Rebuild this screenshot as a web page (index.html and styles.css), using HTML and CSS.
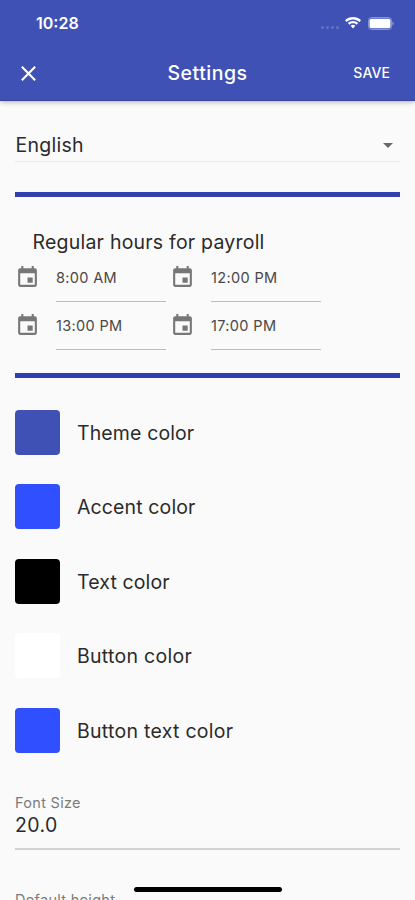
FILE: index.html
```html
<!DOCTYPE html>
<html lang="en">
<head>
<meta charset="utf-8">
<title>Settings</title>
<link rel="stylesheet" href="styles.css">
</head>
<body>
<svg class="defs" aria-hidden="true">
  <symbol id="calendar" viewBox="0 0 24 24"><path d="M17 12h-5v5h5v-5zM16 1v2H8V1H6v2H5c-1.100 0-2 .9-2 2v14c0 1.100.9 2 2 2h14c1.100 0 2-.9 2-2V5c0-1.100-.9-2-2-2h-1V1h-2zm3 18H5V8h14v11z"/></symbol>
</svg>
<header class="header">
  <div class="status">
    <span class="clock">10:28</span>
    <div class="indicators">
      <span class="cell"><i></i><i></i><i></i><i></i></span>
      <svg class="wifi" viewBox="0 0 16 12"><path d="M8 0C4.900 0 2.100 1.200 0 3.200l1.600 1.700C3.300 3.300 5.500 2.400 8 2.400s4.700.9 6.400 2.500L16 3.200C13.900 1.200 11.100 0 8 0zM8 4C6 4 4.200 4.800 2.800 6l1.600 1.700C5.400 6.800 6.600 6.300 8 6.300s2.600.5 3.600 1.400L13.200 6C11.800 4.800 10 4 8 4zM8 7.800c-.9 0-1.700.3-2.300.9L8 11.500l2.300-2.800c-.6-.6-1.400-.9-2.300-.9z"/></svg>
      <svg class="battery" viewBox="0 0 27 13"><rect class="shell" x=".5" y=".5" width="23" height="12" rx="3"/><rect x="1.500" y="1.700" width="21" height="9.600" rx="1.800"/><path class="cap" d="M24.500 4.500c1.600.6 1.600 3.400 0 4z"/></svg>
    </div>
  </div>
  <div class="toolbar">
    <svg class="close" viewBox="0 0 14 14"><path d="M.8.8l12.400 12.400M13.200.8L.8 13.200"/></svg>
    <h1 class="title">Settings</h1>
    <span class="save">SAVE</span>
  </div>
</header>
<main class="content">
  <div class="select"><span class="body-text english">English</span><span class="arrow"></span></div>
  <div class="divider"></div>
  <section class="payroll">
    <h2 class="body-text heading">Regular hours for payroll</h2>
    <div class="times">
      <div class="time"><svg><use href="#calendar"/></svg><span>8:00 AM</span></div>
      <div class="time"><svg><use href="#calendar"/></svg><span>12:00 PM</span></div>
      <div class="time"><svg><use href="#calendar"/></svg><span>13:00 PM</span></div>
      <div class="time"><svg><use href="#calendar"/></svg><span>17:00 PM</span></div>
    </div>
  </section>
  <div class="divider"></div>
  <section class="colors">
    <div class="color"><span class="swatch theme"></span><span class="body-text">Theme color</span></div>
    <div class="color"><span class="swatch accent"></span><span class="body-text">Accent color</span></div>
    <div class="color"><span class="swatch black"></span><span class="body-text">Text color</span></div>
    <div class="color"><span class="swatch white"></span><span class="body-text wide">Button color</span></div>
    <div class="color"><span class="swatch accent"></span><span class="body-text wide">Button text color</span></div>
  </section>
  <div class="field"><span class="label">Font Size</span><span class="body-text value">20.0</span></div>
  <div class="field next"><span class="label">Default height</span></div>
</main>
<div class="home-indicator"></div>
</body>
</html>
```
FILE: styles.css
```css
* { box-sizing: border-box; }
body {
  margin: 0;
  height: 900px;
  overflow: hidden;
  position: relative;
  background: #fafafa;
  color: #2b2b2b;
  font-family: Inter, "Liberation Sans", sans-serif;
}
.defs { display: none; }
.header {
  height: 101px;
  background: #3f51b5;
  color: #fff;
  border-bottom: 1px solid #3445a5;
  box-shadow: 0 1px 5px rgba(0, 0, 0, .3);
}
.status {
  height: 46px;
  padding: 0 20px 0 36px;
  display: flex;
  align-items: center;
  justify-content: space-between;
}
.clock { font-size: 16px; font-weight: 600; line-height: 20px; letter-spacing: 0; }
.indicators { display: flex; align-items: center; }
.cell { display: flex; gap: 2px; padding-top: 8px; margin-right: 6px; }
.cell i { width: 3px; height: 3px; border-radius: 50%; background: #6473c5; }
.wifi { width: 16px; height: 12px; fill: #fff; margin-right: 7px; }
.battery { width: 27px; height: 13px; fill: #fff; }
.battery .shell { fill: none; stroke: #8995d3; }
.battery .cap { fill: #a0abdf; }
.toolbar {
  height: 54px;
  padding: 0 25px 0 21px;
  display: grid;
  grid-template-columns: 60px 1fr 56px;
  align-items: center;
}
.close { width: 15px; height: 15px; fill: none; stroke: #fff; stroke-width: 2; }
.title { margin: 0; font-size: 19.500px; font-weight: 500; letter-spacing: .5px; text-align: center; line-height: 24px; }
.save { font-size: 14px; font-weight: 500; letter-spacing: .1px; text-align: right; line-height: 18px; }
.content { padding: 27px 15px 0; }
.body-text { font-size: 19.500px; line-height: 24px; font-weight: 400; letter-spacing: .12px; white-space: nowrap; }
.body-text.wide { letter-spacing: .28px; }
.select {
  height: 34px;
  padding: 5px 7px 0 .5px;
  border-bottom: 1px solid #ebebeb;
  display: flex;
  justify-content: space-between;
}
.body-text.english { letter-spacing: .25px; }
.arrow { margin-top: 10px; width: 0; height: 0; border: 5px solid transparent; border-top-color: #686868; border-bottom: 0; }
.divider { height: 5px; margin-top: 30px; background: #2f3fae; }
.payroll { padding-top: 33px; height: 176px; }
.heading { margin: 0 0 0 17.500px; letter-spacing: .22px; }
.times { display: grid; grid-template-columns: 155px 155px; grid-auto-rows: 48px; margin-top: 1px; }
.time { display: flex; align-items: flex-start; padding-top: 9px; }
.time svg { width: 25px; height: 25px; margin-top: 1px; margin-right: 16px; fill: #777; }
.time span {
  width: 110px;
  height: 38px;
  padding-top: 5px;
  border-bottom: 1.500px solid #bdbdbd;
  font-size: 14.500px;
  line-height: 18px;
  letter-spacing: .35px;
  color: #484848;
}
.colors { padding-top: 32px; display: grid; grid-auto-rows: 74.400px; }
.payroll + .divider { margin-top: 0; }
.color { display: flex; align-items: flex-start; gap: 17px; }
.color .body-text { padding-top: 11px; }
.swatch { width: 45px; height: 45px; border-radius: 4px; }
.theme { background: #3f51b5; }
.accent { background: #304ffe; }
.black { background: #000; }
.white { background: #fff; }
.field { margin-top: 11px; height: 57px; border-bottom: 2px solid #d2d2d2; display: flex; flex-direction: column; }
.label { font-size: 14.500px; line-height: 20px; letter-spacing: .3px; color: #7b7b7b; }
.body-text.value { letter-spacing: .4px; }
.next { margin-top: 40px; }
.home-indicator {
  position: absolute;
  left: 134px;
  top: 887px;
  width: 148px;
  height: 5px;
  border-radius: 3px;
  background: #000;
}
```
